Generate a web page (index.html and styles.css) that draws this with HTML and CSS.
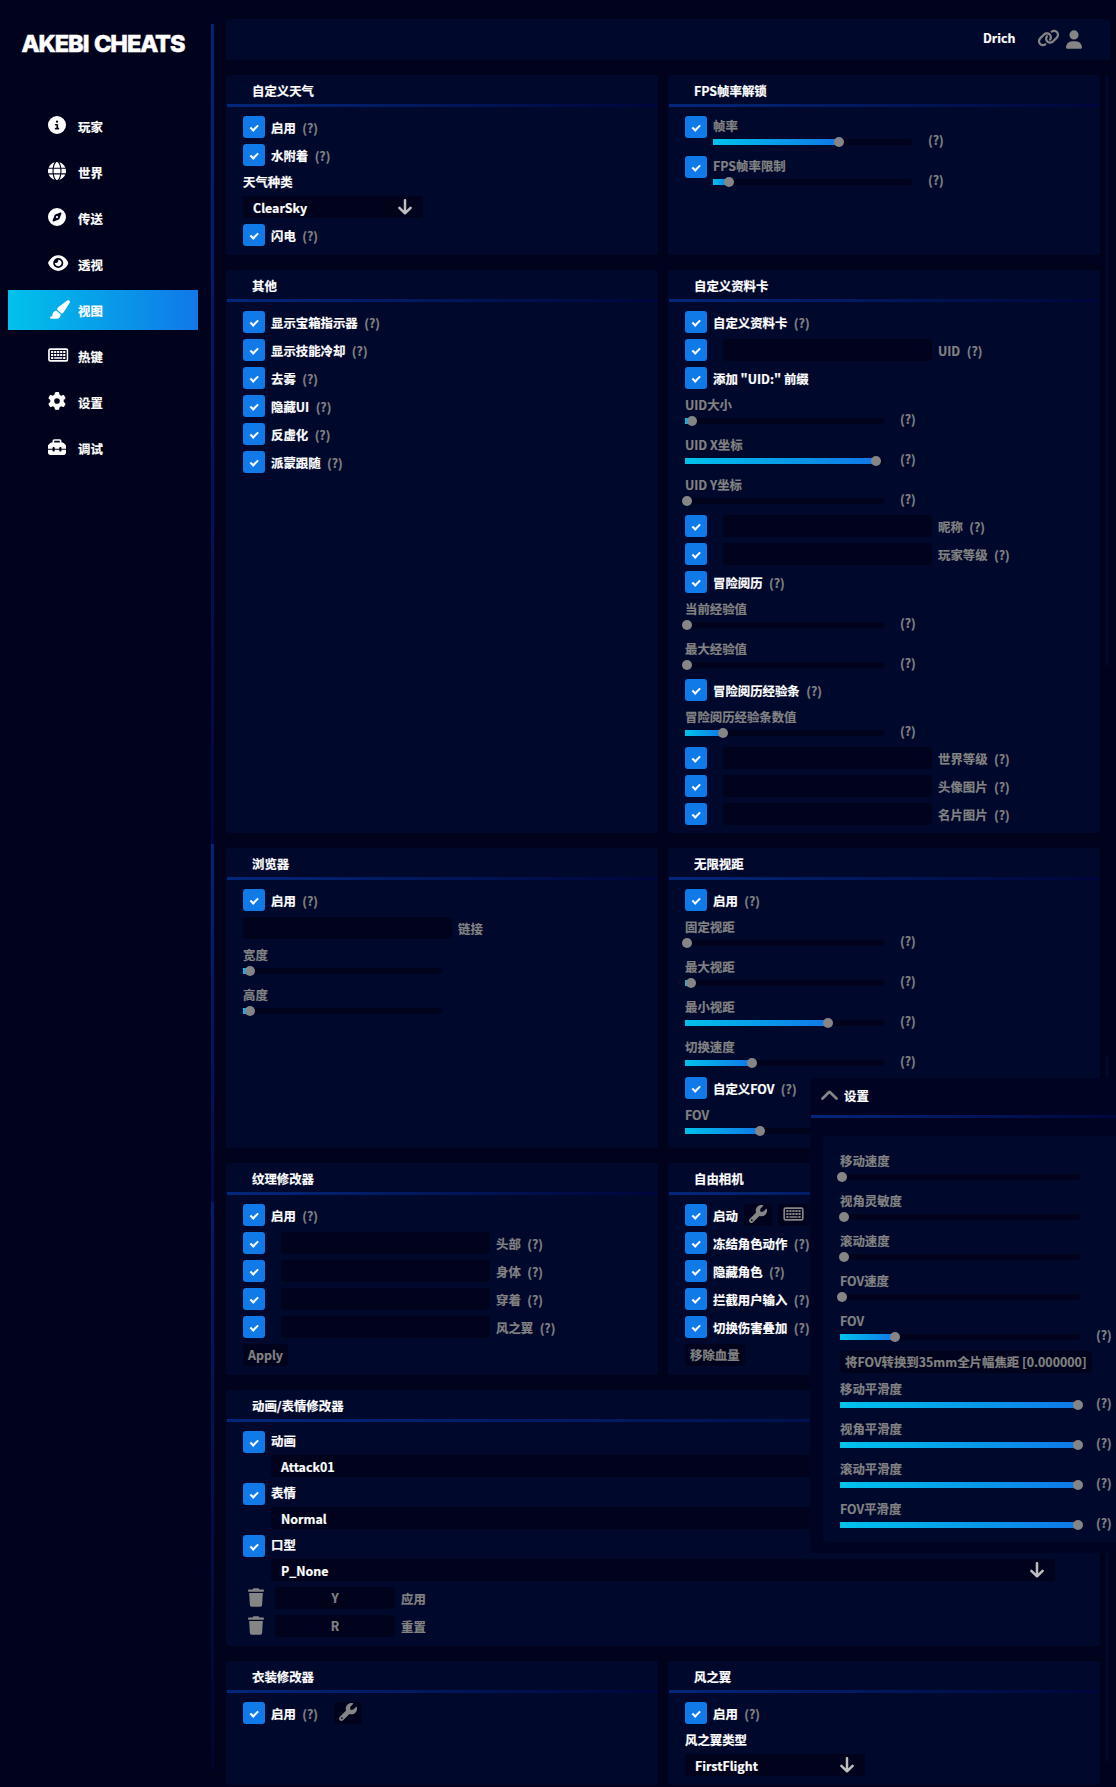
FILE: index.html
```html
<!DOCTYPE html>
<html lang="zh-CN">
<head>
<meta charset="utf-8">
<title>Akebi Cheats</title>
<link rel="stylesheet" href="styles.css">
</head>
<body>
<svg class="sprite" width="0" height="0" aria-hidden="true">
  <symbol id="info" viewBox="0 0 512 512"><path d="M256 512A256 256 0 1 0 256 0a256 256 0 1 0 0 512zM216 336h24V272H216c-13.3 0-24-10.7-24-24s10.7-24 24-24h48c13.3 0 24 10.7 24 24v88h8c13.3 0 24 10.7 24 24s-10.7 24-24 24H216c-13.3 0-24-10.7-24-24s10.7-24 24-24zm40-208a32 32 0 1 1 0 64 32 32 0 1 1 0-64z"/></symbol>
  <symbol id="globe" viewBox="0 0 512 512"><path d="M352 256c0 22.2-1.2 43.6-3.3 64H163.3c-2.2-20.4-3.3-41.8-3.3-64s1.2-43.6 3.3-64H348.7c2.2 20.4 3.3 41.8 3.3 64zm28.8-64H503.9c5.3 20.5 8.1 41.9 8.1 64s-2.8 43.5-8.1 64H380.8c2.1-20.6 3.2-42 3.2-64s-1.1-43.4-3.2-64zm112.6-32H376.7c-10-63.9-29.8-117.4-55.3-151.6c78.3 20.7 142 77.5 171.9 151.6zm-149.1 0H167.7c6.1-36.4 15.5-68.6 27-94.7c10.5-23.6 22.2-40.7 33.5-51.5C239.4 3.2 248.7 0 256 0s16.6 3.2 27.8 13.8c11.3 10.8 23 27.9 33.5 51.5c11.6 26 20.9 58.2 27 94.7zm-209 0H18.6C48.6 85.9 112.2 29.1 190.6 8.4C165.1 42.6 145.3 96.1 135.3 160zM8.1 192H131.2c-2.1 20.6-3.2 42-3.2 64s1.1 43.4 3.2 64H8.1C2.8 299.5 0 278.1 0 256s2.8-43.5 8.1-64zM194.7 446.6c-11.6-26-20.9-58.2-27-94.6H344.3c-6.1 36.4-15.5 68.6-27 94.6c-10.5 23.6-22.2 40.7-33.5 51.5C272.6 508.8 263.3 512 256 512s-16.6-3.2-27.8-13.8c-11.3-10.8-23-27.9-33.5-51.5zM135.3 352c10 63.9 29.8 117.4 55.3 151.6C112.2 482.9 48.6 426.1 18.6 352H135.3zm358.1 0c-30 74.1-93.6 130.9-171.9 151.6c25.5-34.2 45.2-87.7 55.3-151.6H493.4z"/></symbol>
  <symbol id="compass" viewBox="0 0 512 512"><path d="M256 512A256 256 0 1 0 256 0a256 256 0 1 0 0 512zm50.7-186.9L162.4 380.6c-19.4 7.5-38.5-11.6-31-31l55.5-144.3c3.3-8.5 9.9-15.1 18.4-18.4l144.3-55.5c19.4-7.5 38.5 11.6 31 31L325.1 306.7c-3.2 8.5-9.9 15.1-18.4 18.4zM288 256a32 32 0 1 0 -64 0 32 32 0 1 0 64 0z"/></symbol>
  <symbol id="eye" viewBox="0 0 576 512"><path d="M288 32c-80.8 0-145.5 36.8-192.6 80.6C48.6 156 17.3 208 2.5 243.7c-3.3 7.9-3.3 16.7 0 24.6C17.3 304 48.6 356 95.4 399.4C142.5 443.2 207.2 480 288 480s145.5-36.8 192.6-80.6c46.8-43.5 78.1-95.4 93-131.1c3.3-7.9 3.3-16.7 0-24.6c-14.9-35.7-46.2-87.7-93-131.1C433.5 68.8 368.8 32 288 32zM144 256a144 144 0 1 1 288 0 144 144 0 1 1 -288 0zm144-64c0 35.3-28.7 64-64 64c-7.1 0-13.9-1.2-20.3-3.3c-5.5-1.8-11.9 1.6-11.7 7.4c.3 6.9 1.3 13.8 3.2 20.7c13.7 51.2 66.4 81.6 117.6 67.9s81.6-66.4 67.9-117.6c-11.1-41.5-47.8-69.4-88.6-71.1c-5.8-.2-9.2 6.1-7.4 11.7c2.1 6.4 3.3 13.2 3.3 20.3z"/></symbol>
  <symbol id="brush" viewBox="0 0 576 512"><path d="M339.3 367.1c27.3-3.9 51.9-19.4 67.2-42.9L568.2 74.1c12.6-19.5 9.4-45.3-7.6-61.2S517.7-4.4 499.1 9.6L262.4 187.2c-24 18-38.2 46.1-38.4 76.1L339.3 367.1zm-19.6 25.4l-116-104.4C143.9 290.3 96 339.6 96 400c0 3.9 .2 7.8 .6 11.6C98.4 429.1 86.4 448 68.8 448H64c-17.7 0-32 14.3-32 32s14.3 32 32 32H208c61.9 0 112-50.1 112-112c0-2.5-.1-5-.2-7.5z"/></symbol>
  <symbol id="keyboard" viewBox="0 0 576 512"><path fill-rule="evenodd" d="M64 64H512a64 64 0 0 1 64 64V384a64 64 0 0 1-64 64H64a64 64 0 0 1-64-64V128A64 64 0 0 1 64 64zM64 112a16 16 0 0 0-16 16V384a16 16 0 0 0 16 16H512a16 16 0 0 0 16-16V128a16 16 0 0 0-16-16z"/><path d="M84 140h62v60H84zM170 140h62v60h-62zM256 140h62v60h-62zM342 140h62v60h-62zM428 140h62v60h-62zM84 226h62v60H84zM170 226h62v60h-62zM256 226h62v60h-62zM342 226h62v60h-62zM428 226h62v60h-62zM84 312h62v60H84zM170 318h234v46H170zM428 312h62v60h-62z"/></symbol>
  <symbol id="gear" viewBox="0 0 512 512"><path d="M495.9 166.6c3.2 8.7 .5 18.4-6.4 24.6l-43.3 39.4c1.1 8.3 1.7 16.8 1.7 25.4s-.6 17.1-1.7 25.4l43.3 39.4c6.9 6.2 9.6 15.9 6.4 24.6c-4.4 11.9-9.7 23.3-15.8 34.3l-4.7 8.1c-6.6 11-14 21.4-22.1 31.2c-5.9 7.2-15.7 9.6-24.5 6.8l-55.7-17.7c-13.4 10.3-28.2 18.9-44 25.4l-12.5 57.1c-2 9.1-9 16.3-18.2 17.8c-13.8 2.3-28 3.5-42.5 3.5s-28.7-1.2-42.5-3.5c-9.2-1.5-16.2-8.7-18.2-17.8l-12.5-57.1c-15.8-6.5-30.6-15.1-44-25.4L83.1 425.9c-8.8 2.8-18.6 .3-24.5-6.8c-8.1-9.8-15.5-20.2-22.1-31.2l-4.7-8.1c-6.1-11-11.4-22.4-15.8-34.3c-3.2-8.7-.5-18.4 6.4-24.6l43.3-39.4C64.6 273.1 64 264.6 64 256s.6-17.1 1.7-25.4L22.4 191.2c-6.9-6.2-9.6-15.9-6.4-24.6c4.4-11.9 9.7-23.3 15.8-34.3l4.7-8.1c6.6-11 14-21.4 22.1-31.2c5.9-7.2 15.7-9.6 24.5-6.8l55.7 17.7c13.4-10.3 28.2-18.9 44-25.4l12.5-57.1c2-9.1 9-16.3 18.2-17.8C227.3 1.2 241.5 0 256 0s28.7 1.2 42.5 3.5c9.2 1.5 16.2 8.7 18.2 17.8l12.5 57.1c15.8 6.5 30.6 15.1 44 25.4l55.7-17.7c8.8-2.8 18.6-.3 24.5 6.8c8.1 9.8 15.5 20.2 22.1 31.2l4.7 8.1c6.1 11 11.4 22.4 15.8 34.3zM256 336a80 80 0 1 0 0-160 80 80 0 1 0 0 160z"/></symbol>
  <symbol id="toolbox" viewBox="0 0 512 512"><path d="M176 88v40H336V88c0-4.4-3.6-8-8-8H184c-4.4 0-8 3.6-8 8zm-48 40V88c0-30.9 25.1-56 56-56H328c30.9 0 56 25.1 56 56v40h28.1c12.7 0 24.9 5.1 33.9 14.1l51.9 51.9c9 9 14.1 21.2 14.1 33.9V304H384V288c0-17.7-14.3-32-32-32s-32 14.3-32 32v16H192V288c0-17.7-14.3-32-32-32s-32 14.3-32 32v16H0V227.9c0-12.7 5.1-24.9 14.1-33.9l51.9-51.9c9-9 21.2-14.1 33.9-14.1H128zM0 416V336H128v16c0 17.7 14.3 32 32 32s32-14.3 32-32V336H320v16c0 17.7 14.3 32 32 32s32-14.3 32-32V336H512v80c0 35.3-28.7 64-64 64H64c-35.3 0-64-28.7-64-64z"/></symbol>
  <symbol id="user" viewBox="0 0 448 512"><path d="M224 256A128 128 0 1 0 224 0a128 128 0 1 0 0 256zm-45.7 48C79.8 304 0 383.8 0 482.3C0 498.7 13.3 512 29.7 512H418.3c16.4 0 29.7-13.3 29.7-29.7C448 383.8 368.2 304 269.7 304H178.3z"/></symbol>
  <symbol id="link" viewBox="0 0 640 512"><path d="M579.8 267.7c56.5-56.5 56.5-148 0-204.5c-50-50-128.8-56.5-186.3-15.4l-1.6 1.1c-14.4 10.3-17.7 30.3-7.4 44.6s30.3 17.7 44.6 7.4l1.6-1.1c32.1-22.9 76-19.3 103.8 8.6c31.5 31.5 31.5 82.5 0 114L422.3 334.8c-31.5 31.5-82.5 31.5-114 0c-27.9-27.9-31.5-71.8-8.6-103.8l1.1-1.6c10.3-14.4 6.9-34.4-7.4-44.6s-34.4-6.9-44.6 7.4l-1.1 1.6C206.5 251.2 213 330 263 380c56.5 56.5 148 56.5 204.5 0L579.8 267.7zM60.2 244.3c-56.5 56.5-56.5 148 0 204.5c50 50 128.8 56.5 186.3 15.4l1.6-1.1c14.4-10.3 17.7-30.3 7.4-44.6s-30.3-17.7-44.6-7.4l-1.6 1.1c-32.1 22.9-76 19.3-103.8-8.6C74 372 74 321 105.5 289.5L217.7 177.2c31.5-31.5 82.5-31.5 114 0c27.9 27.9 31.5 71.8 8.6 103.9l-1.1 1.6c-10.3 14.4-6.9 34.4 7.4 44.6s34.4 6.9 44.6-7.4l1.1-1.6C433.5 260.8 427 182 377 132c-56.5-56.5-148-56.5-204.5 0L60.2 244.3z"/></symbol>
  <symbol id="wrench" viewBox="0 0 512 512"><path d="M352 320c88.4 0 160-71.6 160-160c0-15.3-2.2-30.1-6.2-44.2c-3.1-10.8-16.4-13.2-24.3-5.3l-76.8 76.8c-3 3-7.1 4.7-11.3 4.7H336c-8.8 0-16-7.2-16-16V118.6c0-4.2 1.7-8.3 4.7-11.3l76.8-76.8c7.9-7.9 5.4-21.2-5.3-24.3C382.1 2.2 367.3 0 352 0C263.6 0 192 71.6 192 160c0 19.1 3.4 37.5 9.5 54.5L19.9 396.1C7.2 408.8 0 426.1 0 444.1C0 481.6 30.4 512 67.9 512c18 0 35.3-7.2 48-19.9L297.5 310.5c17 6.2 35.4 9.5 54.5 9.5zM80 408a24 24 0 1 1 0 48 24 24 0 1 1 0-48z"/></symbol>
  <symbol id="trash" viewBox="0 0 448 512"><path d="M135.2 17.7L128 32H32C14.3 32 0 46.3 0 64S14.3 96 32 96H416c17.7 0 32-14.3 32-32s-14.3-32-32-32H320l-7.2-14.3C307.4 6.8 296.3 0 284.2 0H163.8c-12.1 0-23.2 6.8-28.6 17.7zM416 128H32L53.2 467c1.6 25.3 22.6 45 47.9 45H346.9c25.3 0 46.3-19.7 47.9-45L416 128z"/></symbol>
  <symbol id="arrow" viewBox="0 0 14 16"><path d="M7 1.2V14.2M1.4 8.8L7 14.4L12.6 8.8" fill="none" stroke="currentColor" stroke-width="2.5" stroke-linecap="round" stroke-linejoin="round"/></symbol>
  <symbol id="chevron" viewBox="0 0 17 10"><path d="M1.5 8.5L8.5 1.8L15.5 8.5" fill="none" stroke="currentColor" stroke-width="2.7" stroke-linecap="round" stroke-linejoin="round"/></symbol>
</svg>

<div class="app">
  <aside class="sidebar">
    <h1 class="logo">AKEBI CHEATS</h1>
    <nav class="nav">
      <a class="nav-item"><svg class="nav-icon"><use href="#info"/></svg><span>玩家</span></a>
      <a class="nav-item"><svg class="nav-icon"><use href="#globe"/></svg><span>世界</span></a>
      <a class="nav-item"><svg class="nav-icon"><use href="#compass"/></svg><span>传送</span></a>
      <a class="nav-item"><svg class="nav-icon wide"><use href="#eye"/></svg><span>透视</span></a>
      <a class="nav-item active"><svg class="nav-icon brush"><use href="#brush"/></svg><span>视图</span></a>
      <a class="nav-item"><svg class="nav-icon wide"><use href="#keyboard"/></svg><span>热键</span></a>
      <a class="nav-item"><svg class="nav-icon"><use href="#gear"/></svg><span>设置</span></a>
      <a class="nav-item"><svg class="nav-icon"><use href="#toolbox"/></svg><span>调试</span></a>
    </nav>
  </aside>
  <div class="divider"><i class="seg-a"></i><i class="seg-b"></i><i class="seg-c"></i></div>

  <main class="main">
    <header class="topbar">
      <span class="username">Drich</span>
      <svg class="link-icon"><use href="#link"/></svg>
      <svg class="user-icon"><use href="#user"/></svg>
    </header>

    <div class="content">
      <div class="panels">
        <section class="panel">
          <h2>自定义天气</h2>
          <div class="body">
            <div class="row"><i class="check"></i><b>启用</b><em>(?)</em></div>
            <div class="row"><i class="check"></i><b>水附着</b><em>(?)</em></div>
            <div class="field"><b>天气种类</b><div class="combo"><span>ClearSky</span><svg><use href="#arrow"/></svg></div></div>
            <div class="row"><i class="check"></i><b>闪电</b><em>(?)</em></div>
          </div>
        </section>

        <section class="panel">
          <h2>FPS帧率解锁</h2>
          <div class="body">
            <div class="row tall"><i class="check"></i><div class="slider"><span>帧率</span><div class="track"><div class="fill" style="width:126px"></div></div></div><em>(?)</em></div>
            <div class="row tall"><i class="check"></i><div class="slider"><span>FPS帧率限制</span><div class="track"><div class="fill" style="width:16px"></div></div></div><em>(?)</em></div>
          </div>
        </section>

        <section class="panel">
          <h2>其他</h2>
          <div class="body">
            <div class="row"><i class="check"></i><b>显示宝箱指示器</b><em>(?)</em></div>
            <div class="row"><i class="check"></i><b>显示技能冷却</b><em>(?)</em></div>
            <div class="row"><i class="check"></i><b>去雾</b><em>(?)</em></div>
            <div class="row"><i class="check"></i><b>隐藏UI</b><em>(?)</em></div>
            <div class="row"><i class="check"></i><b>反虚化</b><em>(?)</em></div>
            <div class="row"><i class="check"></i><b>派蒙跟随</b><em>(?)</em></div>
          </div>
        </section>

        <section class="panel profile">
          <h2>自定义资料卡</h2>
          <div class="body">
            <div class="row"><i class="check"></i><b>自定义资料卡</b><em>(?)</em></div>
            <div class="row"><i class="check"></i><div class="input"></div><span>UID</span><em>(?)</em></div>
            <div class="row"><i class="check"></i><b>添加 "UID:" 前缀</b></div>
            <div class="row tall"><div class="slider"><span>UID大小</span><div class="track"><div class="fill" style="width:7px"></div></div></div><em>(?)</em></div>
            <div class="row tall"><div class="slider"><span>UID X坐标</span><div class="track"><div class="fill" style="width:191px"></div></div></div><em>(?)</em></div>
            <div class="row tall"><div class="slider"><span>UID Y坐标</span><div class="track"><div class="fill" style="width:2px"></div></div></div><em>(?)</em></div>
            <div class="row"><i class="check"></i><div class="input"></div><span>昵称</span><em>(?)</em></div>
            <div class="row"><i class="check"></i><div class="input"></div><span>玩家等级</span><em>(?)</em></div>
            <div class="row"><i class="check"></i><b>冒险阅历</b><em>(?)</em></div>
            <div class="row tall"><div class="slider"><span>当前经验值</span><div class="track"><div class="fill" style="width:2px"></div></div></div><em>(?)</em></div>
            <div class="row tall"><div class="slider"><span>最大经验值</span><div class="track"><div class="fill" style="width:2px"></div></div></div><em>(?)</em></div>
            <div class="row"><i class="check"></i><b>冒险阅历经验条</b><em>(?)</em></div>
            <div class="row tall"><div class="slider"><span>冒险阅历经验条数值</span><div class="track"><div class="fill" style="width:38px"></div></div></div><em>(?)</em></div>
            <div class="row"><i class="check"></i><div class="input"></div><span>世界等级</span><em>(?)</em></div>
            <div class="row"><i class="check"></i><div class="input"></div><span>头像图片</span><em>(?)</em></div>
            <div class="row"><i class="check"></i><div class="input"></div><span>名片图片</span><em>(?)</em></div>
          </div>
        </section>

        <section class="panel">
          <h2>浏览器</h2>
          <div class="body">
            <div class="row"><i class="check"></i><b>启用</b><em>(?)</em></div>
            <div class="row"><div class="input"></div><span>链接</span></div>
            <div class="row tall"><div class="slider"><span>宽度</span><div class="track"><div class="fill" style="width:7px"></div></div></div></div>
            <div class="row tall"><div class="slider"><span>高度</span><div class="track"><div class="fill" style="width:7px"></div></div></div></div>
          </div>
        </section>

        <section class="panel">
          <h2>无限视距</h2>
          <div class="body">
            <div class="row"><i class="check"></i><b>启用</b><em>(?)</em></div>
            <div class="row tall"><div class="slider"><span>固定视距</span><div class="track"><div class="fill" style="width:2px"></div></div></div><em>(?)</em></div>
            <div class="row tall"><div class="slider"><span>最大视距</span><div class="track"><div class="fill" style="width:6px"></div></div></div><em>(?)</em></div>
            <div class="row tall"><div class="slider"><span>最小视距</span><div class="track"><div class="fill" style="width:143px"></div></div></div><em>(?)</em></div>
            <div class="row tall"><div class="slider"><span>切换速度</span><div class="track"><div class="fill" style="width:67px"></div></div></div><em>(?)</em></div>
            <div class="row"><i class="check"></i><b>自定义FOV</b><em>(?)</em></div>
            <div class="row tall"><div class="slider"><span>FOV</span><div class="track"><div class="fill" style="width:75px"></div></div></div></div>
          </div>
        </section>

        <section class="panel">
          <h2>纹理修改器</h2>
          <div class="body">
            <div class="row"><i class="check"></i><b>启用</b><em>(?)</em></div>
            <div class="row"><i class="check"></i><div class="input"></div><span>头部</span><em>(?)</em></div>
            <div class="row"><i class="check"></i><div class="input"></div><span>身体</span><em>(?)</em></div>
            <div class="row"><i class="check"></i><div class="input"></div><span>穿着</span><em>(?)</em></div>
            <div class="row"><i class="check"></i><div class="input"></div><span>风之翼</span><em>(?)</em></div>
            <div class="row"><div class="btn">Apply</div></div>
          </div>
        </section>

        <section class="panel">
          <h2>自由相机</h2>
          <div class="body">
            <div class="row"><i class="check"></i><b>启动</b><div class="icon-btn"><svg><use href="#wrench"/></svg></div><div class="icon-btn keys"><svg><use href="#keyboard"/></svg></div></div>
            <div class="row"><i class="check"></i><b>冻结角色动作</b><em>(?)</em></div>
            <div class="row"><i class="check"></i><b>隐藏角色</b><em>(?)</em></div>
            <div class="row"><i class="check"></i><b>拦截用户输入</b><em>(?)</em></div>
            <div class="row"><i class="check"></i><b>切换伤害叠加</b><em>(?)</em></div>
            <div class="row"><div class="btn">移除血量</div></div>
          </div>
        </section>

        <section class="panel full">
          <h2>动画/表情修改器</h2>
          <div class="body">
            <div class="row pick"><i class="check"></i><div class="field"><b>动画</b><div class="combo"><span>Attack01</span><svg><use href="#arrow"/></svg></div></div></div>
            <div class="row pick"><i class="check"></i><div class="field"><b>表情</b><div class="combo"><span>Normal</span><svg><use href="#arrow"/></svg></div></div></div>
            <div class="row pick"><i class="check"></i><div class="field"><b>口型</b><div class="combo"><span>P_None</span><svg><use href="#arrow"/></svg></div></div></div>
            <div class="row"><div class="bin"><svg><use href="#trash"/></svg></div><div class="btn hotkey">Y</div><span>应用</span></div>
            <div class="row"><div class="bin"><svg><use href="#trash"/></svg></div><div class="btn hotkey">R</div><span>重置</span></div>
          </div>
        </section>

        <section class="panel">
          <h2>衣装修改器</h2>
          <div class="body">
            <div class="row"><i class="check"></i><b>启用</b><em>(?)</em><div class="icon-btn apart"><svg><use href="#wrench"/></svg></div></div>
          </div>
        </section>

        <section class="panel">
          <h2>风之翼</h2>
          <div class="body">
            <div class="row"><i class="check"></i><b>启用</b><em>(?)</em></div>
            <div class="field"><b>风之翼类型</b><div class="combo"><span>FirstFlight</span><svg><use href="#arrow"/></svg></div></div>
          </div>
        </section>
      </div>
      <div class="scrollbar"><i class="thumb-a"></i><i class="thumb-b"></i></div>
    </div>
  </main>

  <section class="popup">
    <header class="popup-head"><svg><use href="#chevron"/></svg><b>设置</b></header>
    <div class="popup-body">
      <div class="row tall"><div class="slider"><span>移动速度</span><div class="track"><div class="fill" style="width:2px"></div></div></div></div>
      <div class="row tall"><div class="slider"><span>视角灵敏度</span><div class="track"><div class="fill none" style="width:4px"></div></div></div></div>
      <div class="row tall"><div class="slider"><span>滚动速度</span><div class="track"><div class="fill none" style="width:4px"></div></div></div></div>
      <div class="row tall"><div class="slider"><span>FOV速度</span><div class="track"><div class="fill" style="width:2px"></div></div></div></div>
      <div class="row tall"><div class="slider"><span>FOV</span><div class="track"><div class="fill" style="width:55px"></div></div></div><em>(?)</em></div>
      <div class="row"><div class="btn">将FOV转换到35mm全片幅焦距 [0.000000]</div></div>
      <div class="row tall"><div class="slider"><span>移动平滑度</span><div class="track"><div class="fill" style="width:238px"></div></div></div><em>(?)</em></div>
      <div class="row tall"><div class="slider"><span>视角平滑度</span><div class="track"><div class="fill" style="width:238px"></div></div></div><em>(?)</em></div>
      <div class="row tall"><div class="slider"><span>滚动平滑度</span><div class="track"><div class="fill" style="width:238px"></div></div></div><em>(?)</em></div>
      <div class="row tall"><div class="slider"><span>FOV平滑度</span><div class="track"><div class="fill" style="width:238px"></div></div></div><em>(?)</em></div>
    </div>
  </section>
</div>
</body>
</html>
```
FILE: styles.css
```css
*, *::after { box-sizing: border-box; }

body {
  margin: 0;
  background: #00031b;
  color: #fff;
  font: 700 12.4px/18px "Noto Sans CJK SC", sans-serif;
  -webkit-text-stroke: 0.2px currentColor;
}

.sprite { position: absolute; }
svg { display: block; flex: none; fill: currentColor; }
i, em { font-style: normal; }
b { font-weight: 700; }

.app {
  position: relative;
  display: flex;
  width: 1116px;
  height: 1787px;
  overflow: hidden;
}

/* sidebar */
.sidebar { width: 211px; padding-top: 29px; }

.logo {
  margin: 0 0 47px 21.5px;
  font: 800 23.5px/30px Inter, sans-serif;
  letter-spacing: -1.05px;
  word-spacing: 1.5px;
  white-space: nowrap;
  -webkit-text-stroke: 0.5px currentColor;
}

.nav { display: flex; flex-direction: column; gap: 6px; padding: 0 13px 0 8px; }
.nav-item { display: flex; align-items: center; height: 40px; padding-left: 40px; }
.nav-item span { width: 60px; margin-left: auto; margin-right: 60px; padding-top: 1px; }
.nav-icon { width: 18px; height: 18px; margin-top: -3px; }
.nav-icon.wide { width: 20.5px; }
.nav-icon.brush { width: 21px; height: 19px; margin-left: 1px; margin-top: -2px; }
.nav-item.active { background: linear-gradient(90deg, #00c2eb, #1078e8); }

.divider { display: flex; flex-direction: column; width: 3px; margin-right: 12px; padding-top: 24px; }
.divider i { background: linear-gradient(#012577, #000641); }
.divider .seg-a { height: 820px; }
.divider .seg-b { height: 358px; background: linear-gradient(#012577, #000b48); }
.divider .seg-c { height: 568px; background: linear-gradient(#011c68, #00042f); }

/* main column */
.main { width: 884px; padding-top: 19px; }

.topbar {
  display: flex;
  align-items: center;
  height: 41px;
  padding: 0 28px 3px 0;
  margin-bottom: 15px;
  border-radius: 3px;
  background: #00082c;
  color: #858585;
}
.username { margin-left: auto; margin-right: 21.5px; color: #fff; }
.link-icon { width: 23px; height: 18px; margin-right: 6px; }
.user-icon { width: 16px; height: 19px; margin-top: 3px; }

.content { display: flex; gap: 5px; }
.panels {
  display: grid;
  grid-template-columns: 432px 432px;
  gap: 15px 10px;
  width: 874px;
}
.panel { border-radius: 3px; background: #00082c; }
.panel.full { grid-column: 1 / -1; }

.panel h2 {
  height: 32px;
  margin: 0;
  padding: 7px 0 0 26px;
  font-size: inherit;
  line-height: 18px;
  background: linear-gradient(90deg, #01277a, #00053b) 1px 29px / 100% 3px no-repeat;
}

.body { display: flex; flex-direction: column; gap: 6px; padding: 9px 17px; }
.profile .body { padding-bottom: 8px; }

.row { display: flex; flex: none; align-items: center; gap: 6px; height: 22px; white-space: nowrap; }
.row > b, .row > span, .row > em { padding-top: 2px; }
.row span, .row em { color: #828282; }
.row em { margin-left: 0.5px; }

.check {
  display: flex;
  justify-content: center;
  flex: none;
  width: 22px;
  height: 22px;
  padding-top: 6.5px;
  border-radius: 3px;
  background: #107be8;
}
.check::after {
  content: "";
  width: 4.5px;
  height: 7.5px;
  border: solid #fff;
  border-width: 0 2px 2px 0;
  transform: rotate(45deg);
}

.input { width: 209px; height: 22px; border-radius: 4px; background: #00031b; }
.check + .input { margin-left: 10px; }

.field { display: flex; flex-direction: column; gap: 6px; }
.field > b { height: 18px; padding-top: 1px; }
.combo {
  display: flex;
  align-items: center;
  justify-content: space-between;
  width: 180px;
  height: 22px;
  padding: 0 11.5px 0 10px;
  border-radius: 3px;
  background: #00031b;
}
.combo span, .row .combo span { padding-top: 2px; color: #fff; }
.combo svg { width: 14px; height: 16px; color: #bfbfbf; }

.row.pick { height: 46px; align-items: flex-start; }
.row.pick .combo { width: 784px; }

.row.tall { height: 34px; align-items: flex-start; }
.slider { width: 199px; }
.slider span { display: block; height: 23px; padding-top: 1px; }
.row.tall > em { padding-top: 15px; margin-left: 10px; }
.track { height: 6px; border-radius: 3px; background: #00031b; }
.fill {
  position: relative;
  height: 6px;
  background: linear-gradient(90deg, #00c2eb, #1078e8);
}
.fill::after {
  content: "";
  position: absolute;
  top: -2px;
  right: -5px;
  width: 10px;
  height: 10px;
  border-radius: 50%;
  background: #858585;
}
.fill.none { background: none; }

.btn {
  height: 22px;
  padding: 2px 5px 0;
  border-radius: 4px;
  background: #00031b;
  color: #828282;
}
.btn.hotkey { width: 120px; text-align: center; }
.icon-btn {
  display: flex;
  justify-content: center;
  width: 28px;
  height: 22px;
  padding-top: 1px;
  border-radius: 4px;
  background: #00031b;
  color: #858585;
}
.icon-btn svg { width: 18px; height: 18px; }
.icon-btn.keys { width: 31px; }
.icon-btn.keys svg { width: 21px; }
.icon-btn.apart { margin-left: 10px; }
.bin { width: 26px; padding-left: 5px; color: #858585; }
.bin svg { width: 16px; height: 19px; margin-top: -1px; }

.scrollbar { display: flex; flex-direction: column; gap: 389px; width: 4px; }
.scrollbar i { border-radius: 2px; background: #00082c; }
.thumb-a { height: 591px; }
.thumb-b { height: 707px; }

/* floating settings window */
.popup {
  position: absolute;
  left: 810px;
  top: 1078px;
  width: 320px;
  height: 475px;
  border-radius: 4px;
  background: #010323;
}
.popup-head {
  display: flex;
  align-items: center;
  gap: 6.5px;
  height: 40px;
  margin-left: 1px;
  padding: 0 0 5px 9.5px;
  background: linear-gradient(90deg, #01277a, #00053b) 0 37px / 100% 3px no-repeat;
}
.popup-head svg { width: 17px; height: 10px; color: #858585; margin-top: -1px; }
.popup-body {
  display: flex;
  flex-direction: column;
  align-items: flex-start;
  gap: 6px;
  height: 406px;
  margin: 18px 0 0 13px;
  padding: 15px 17px;
  border-radius: 3px;
  background: #00082c;
}
.popup .slider { width: 240px; }
```
